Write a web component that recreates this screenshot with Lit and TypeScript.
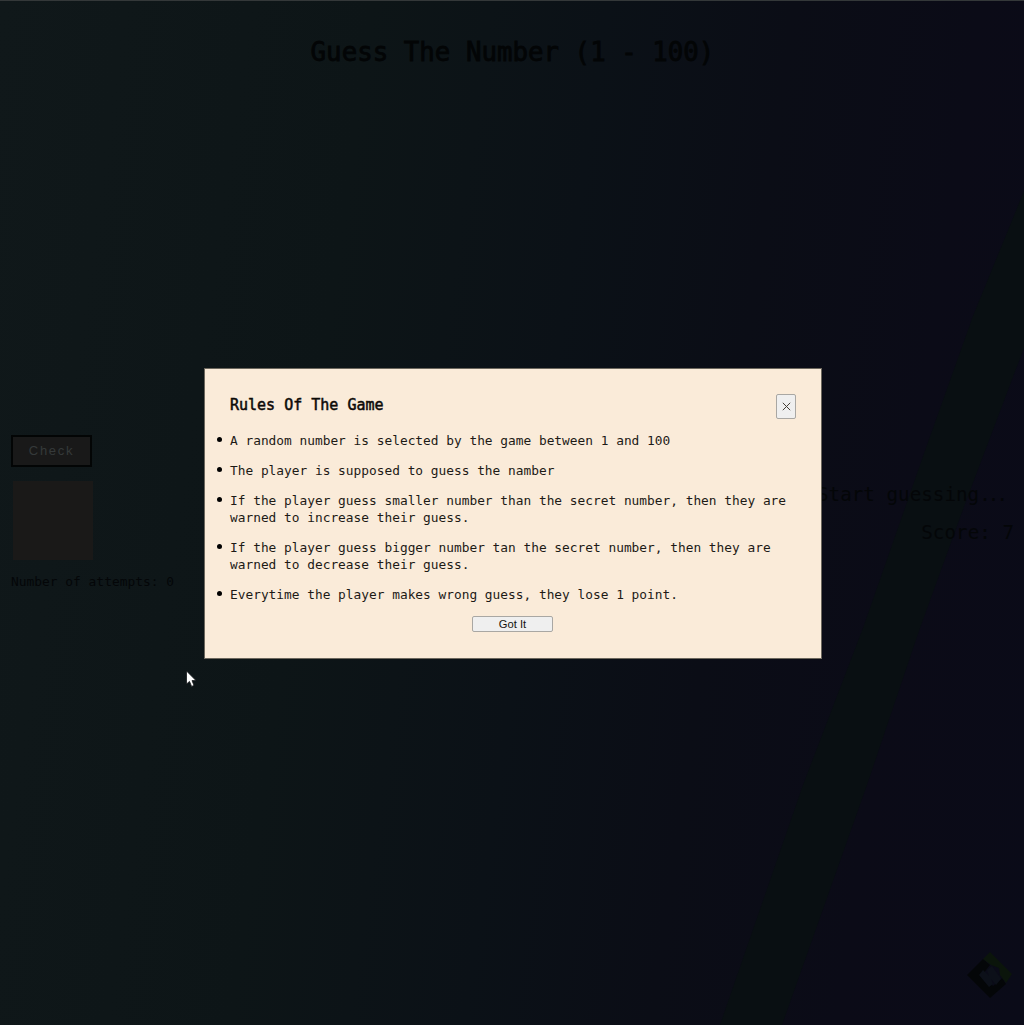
import { LitElement, html, css } from "lit";
import { customElement } from "lit/decorators.js";

const RULES = [
  "A random number is selected by the game between 1 and 100",
  "The player is supposed to guess the namber",
  "If the player guess smaller number than the secret number, then they are warned to increase their guess.",
  "If the player guess bigger number tan the secret number, then they are warned to decrease their guess.",
  "Everytime the player makes wrong guess, they lose 1 point.",
];

@customElement("rules-dialog")
class RulesDialog extends LitElement {
  static styles = css`
    :host {
      display: block;
      box-sizing: border-box;
      width: 618px;
      height: 291px;
      padding: 25px;
      border: 1px solid #6c675d;
      background: #faebd9;
      color: #1d1a16;
    }
    .head {
      display: flex;
      justify-content: space-between;
      align-items: flex-start;
      height: 38px;
    }
    .title {
      margin: 0;
      font-size: 15px;
      line-height: 23px;
      font-weight: 400;
      -webkit-text-stroke: 0.5px #0c0a08;
      color: #0c0a08;
    }
    button {
      box-sizing: border-box;
      padding: 0;
      border: 1px solid #a9a7a3;
      border-radius: 2px;
      background: #efefef;
      color: #14120e;
      font: 11.2px/14px "Liberation Sans", sans-serif;
    }
    .close {
      display: flex;
      align-items: center;
      justify-content: center;
      width: 20px;
      height: 25px;
    }
    .list {
      margin: 0;
      padding: 0;
      list-style: none;
      font-size: 12.83px;
      line-height: 17.2px;
    }
    .rule {
      display: flex;
      margin-bottom: 12.8px;
    }
    .dot {
      flex: none;
      width: 5px;
      height: 5px;
      margin: 5px 8px 0 -13px;
      border-radius: 50%;
      background: #000;
    }
    .foot {
      display: flex;
      justify-content: center;
      margin-top: 1.6px;
    }
    .ok {
      width: 81px;
      height: 16px;
      margin-right: 1px;
    }
  `;
  render() {
    return html`
      <div class="head">
        <h2 class="title">Rules Of The Game</h2>
        <button class="close" aria-label="Close">
          <svg width="9" height="9" viewBox="0 0 9 9">
            <path d="M.8.8 8.2 8.2M8.2.8.8 8.2" stroke="#453f36" fill="none" />
          </svg>
        </button>
      </div>
      <ul class="list">
        ${RULES.map((r) => html`<li class="rule"><span class="dot"></span><span>${r}</span></li>`)}
      </ul>
      <div class="foot"><button class="ok">Got It</button></div>
    `;
  }
}

@customElement("app-root")
class AppRoot extends LitElement {
  static styles = css`
    :host {
      display: block;
      position: relative;
      box-sizing: border-box;
      width: 1024px;
      height: 1025px;
      overflow: hidden;
      border-top: 1px solid #343839;
      background: linear-gradient(98deg, #10181a 0%, #0d1517 32%, #0b1117 52%, #0b0d16 68%, #0b0b17 84%, #0a0b18 100%);
      font-family: "DejaVu Sans Mono", monospace;
      color: #040608;
    }
    .scene {
      position: absolute;
      inset: 0;
    }
    .page {
      position: relative;
      display: flex;
      flex-direction: column;
      height: 100%;
    }
    .heading {
      margin: 0;
      padding: 34px 0 0 1px;
      text-align: center;
      font-size: 25.8px;
      line-height: 34px;
      font-weight: 400;
      -webkit-text-stroke: 0.8px #030506;
      color: #030506;
    }
    .board {
      display: flex;
      justify-content: space-between;
      padding: 0 10px 0 11px;
      margin-top: 366px;
    }
    .check {
      box-sizing: border-box;
      display: block;
      width: 81px;
      height: 32px;
      padding: 0;
      border: 2px solid #030505;
      background: #191919;
      color: #35393a;
      font: 13px/16px "Liberation Sans", sans-serif;
      letter-spacing: 1.7px;
    }
    .secret {
      width: 80px;
      height: 79px;
      margin: 14px 0 0 2px;
      background: #1a1918;
    }
    .attempts {
      margin: 13px 0 0;
      font-size: 12.9px;
      line-height: 17px;
    }
    .status {
      margin-top: 47px;
      text-align: right;
      font-size: 19.25px;
      line-height: 26px;
    }
    .status p {
      margin: 0 0 12px;
    }
    .ellipsis {
      letter-spacing: -3px;
      padding-right: 9px;
    }
    .dialog {
      position: absolute;
      left: 204px;
      top: 367px;
    }
    .badge {
      position: absolute;
      left: 965px;
      top: 949px;
    }
    .pointer {
      position: absolute;
      left: 185px;
      top: 670px;
    }
  `;
  render() {
    return html`
      <svg class="scene" width="1024" height="1024" viewBox="0 0 1024 1024">
        <path
          d="M1024 190 L973 315 L927 444 L863 627 L803 784 L720 1024 H782 L867 784 L920 627 L965 503 L1024 347Z"
          fill="#090f12"
        />
      </svg>
      <div class="page">
        <h1 class="heading">Guess The Number (1 - 100)</h1>
        <div class="board">
          <div>
            <button class="check">Check</button>
            <div class="secret"></div>
            <p class="attempts">Number of attempts: 0</p>
          </div>
          <div class="status">
            <p>Start guessing<span class="ellipsis">...</span></p>
            <p>Score: 7</p>
          </div>
        </div>
      </div>
      <rules-dialog class="dialog"></rules-dialog>
      <svg class="badge" width="50" height="50" viewBox="0 0 50 50">
        <path d="M2 25 18 9 25 15 18 24 28 36 37 28 41 34 25 48Z" fill="#040608" />
        <path d="M18 9 25 2 47 24 41 33 35 25 34 18 26 15Z" fill="#0b150b" />
        <path d="M14 25 18 20 24 26 22 20 27 16 36 29 31 35 26 29 28 34 24 37Z" fill="#0c1019" />
      </svg>
      <svg class="pointer" width="14" height="19" viewBox="0 0 14 19">
        <path d="M1.5 0V13L4.5 10.4 6.6 15.4 9 14.4 7 9.6H11Z" fill="#fff" stroke="#15181a" stroke-width=".8" />
      </svg>
    `;
  }
}
